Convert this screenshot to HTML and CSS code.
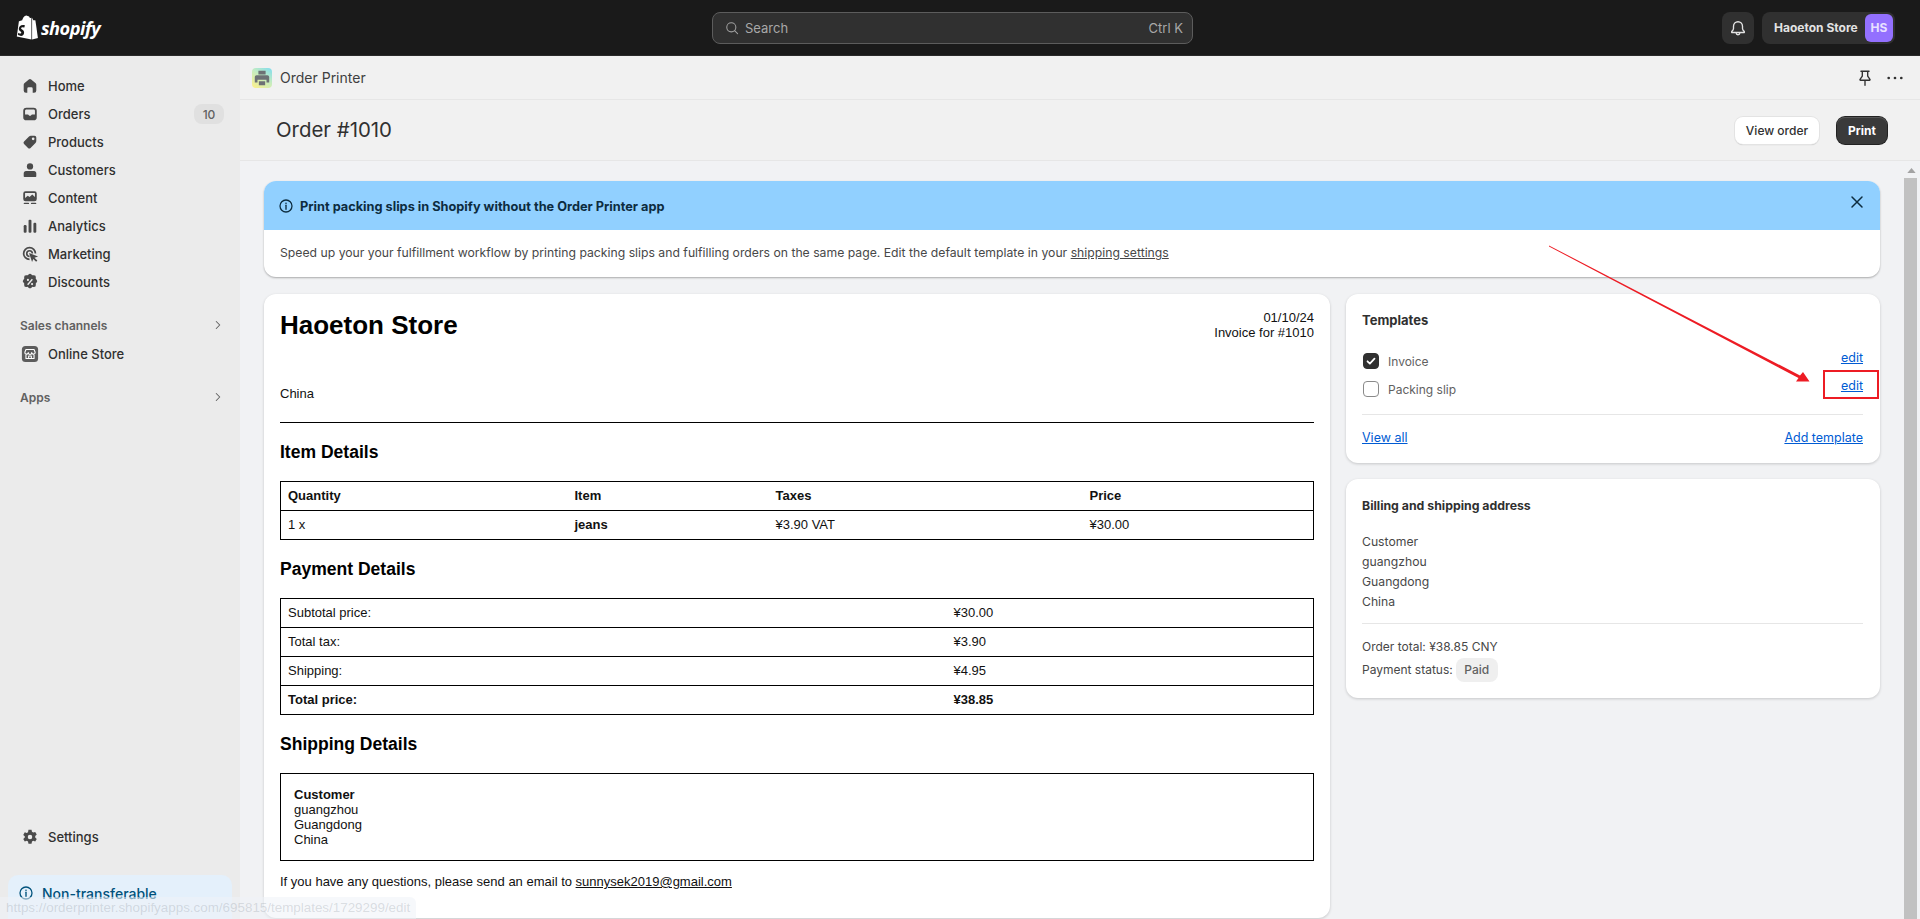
FILE: index.html
```html
<!DOCTYPE html>
<html lang="en">
<head>
<meta charset="utf-8">
<title>Order Printer</title>
<link rel="stylesheet" href="styles.css">
</head>
<body>
<div class="app">
  <header class="topbar">
    <div class="brand">
      <svg class="bag" viewBox="0 0 22 25"><path fill="#fff" d="M14.6 2.9l-.7.2C13.5 1.900 12.800 1 11.700 1h-.1C11.300.6 10.900.4 10.500.4 7.900.4 6.600 3.700 6.200 5.300l-2.500.8c-.8.2-.8.3-.9 1L.8 21.600 15.400 24.400V2.800c-.3 0-.6 0-.8.1z"/><path fill="#fff" d="M16.100 2.800v21.600l5.900-1.400S19.500 5.700 19.400 5.600c0-.2-.2-.3-.3-.3l-1.800-.1-1.200-2.400z"/><path fill="#1a1a1a" d="M9 10.200l-.8 2.500s-.8-.4-1.700-.4c-1.300 0-1.400.8-1.400 1 0 1.100 3 1.600 3 4.200 0 2.100-1.300 3.400-3.100 3.400-2.100 0-3.200-1.300-3.200-1.300l.6-1.900s1.100.9 2 .9c.6 0 .9-.5.9-.9 0-1.500-2.500-1.500-2.500-3.900 0-2 1.400-3.900 4.300-3.900 1.100 0 1.700.3 1.700.3z"/></svg>
      <span class="wordmark">shopify</span>
    </div>
    <div class="search">
      <svg class="ic14" viewBox="0 0 20 20"><circle cx="9" cy="9" r="6.500" fill="none" stroke="#a0a0a0" stroke-width="1.500"/><path d="M14 14l4 4" stroke="#a0a0a0" stroke-width="1.500" stroke-linecap="round"/></svg>
      <span class="search-label">Search</span>
      <span class="search-key">Ctrl K</span>
    </div>
    <div class="top-actions">
      <div class="bell">
        <svg class="ic18" viewBox="0 0 20 20"><path fill="none" stroke="#e3e3e3" stroke-width="1.500" stroke-linejoin="round" d="M10 3a5 5 0 0 0-5 5v2.500c0 1.200-1.300 2.800-2 3.500v1h14v-1c-.7-.7-2-2.300-2-3.500V8a5 5 0 0 0-5-5z"/><path fill="none" stroke="#e3e3e3" stroke-width="1.500" d="M8 15.500a2 2 0 0 0 4 0"/></svg>
      </div>
      <div class="store-pill">
        <span class="store-name">Haoeton Store</span>
        <span class="avatar">HS</span>
      </div>
    </div>
  </header>

  <div class="body">
    <nav class="sidebar">
      <ul class="nav">
        <li class="nav-item">
          <svg class="nav-ic" viewBox="0 0 20 20"><path d="M8.700 2.700a2 2 0 0 1 2.600 0l5 4.300c.5.400.7 1 .7 1.600V15a2.500 2.500 0 0 1-2.500 2.500H13V13a1.500 1.500 0 0 0-1.500-1.500h-3A1.500 1.500 0 0 0 7 13v4.500H5.500A2.500 2.500 0 0 1 3 15V8.600c0-.6.200-1.200.7-1.600z"/></svg>
          <span>Home</span>
        </li>
        <li class="nav-item">
          <svg class="nav-ic" viewBox="0 0 20 20"><path fill-rule="evenodd" d="M6 3h8a3.500 3.500 0 0 1 3.500 3.500v7A3.500 3.500 0 0 1 14 17H6a3.500 3.500 0 0 1-3.500-3.500v-7A3.500 3.500 0 0 1 6 3zm-1.500 7.500h3c.6 0 1 .3 1.200.8.200.5.700.7 1.300.7s1.100-.2 1.300-.7c.2-.5.600-.8 1.200-.8h3v-4c0-.8-.7-1.500-1.500-1.500H6c-.8 0-1.500.7-1.500 1.500z"/></svg>
          <span>Orders</span>
          <span class="count">10</span>
        </li>
        <li class="nav-item">
          <svg class="nav-ic" viewBox="0 0 20 20"><path fill-rule="evenodd" d="M11 3h4a2 2 0 0 1 2 2v4c0 .8-.3 1.500-.9 2.100l-5.500 5.500a2 2 0 0 1-2.800 0l-4.400-4.400a2 2 0 0 1 0-2.800l5.500-5.500C9.500 3.300 10.200 3 11 3zm2.500 5a1.500 1.500 0 1 0 0-3 1.500 1.500 0 0 0 0 3z"/></svg>
          <span>Products</span>
        </li>
        <li class="nav-item">
          <svg class="nav-ic" viewBox="0 0 20 20"><circle cx="10" cy="6" r="3.500"/><path d="M5.500 11h9c1.500 0 2.500 1.300 2.500 2.800V17a.8.8 0 0 1-.8.800H3.800A.8.8 0 0 1 3 17v-3.200C3 12.300 4 11 5.500 11z"/></svg>
          <span>Customers</span>
        </li>
        <li class="nav-item">
          <svg class="nav-ic" viewBox="0 0 20 20"><path fill-rule="evenodd" d="M5 2.500h10A2.500 2.500 0 0 1 17.500 5v6a2.500 2.500 0 0 1-2.500 2.500H5A2.500 2.500 0 0 1 2.500 11V5A2.500 2.500 0 0 1 5 2.500zM4.500 10l3-2.500 2 1.500 3-3 3 3V5c0-.3-.2-.5-.5-.5H5c-.3 0-.5.2-.5.500z"/><rect x="3" y="15.200" width="6" height="1.600" rx=".8"/><rect x="11" y="15.200" width="6" height="1.600" rx=".8"/></svg>
          <span>Content</span>
        </li>
        <li class="nav-item">
          <svg class="nav-ic" viewBox="0 0 20 20"><rect x="3" y="9" width="3.200" height="8.500" rx="1.200"/><rect x="8.400" y="3" width="3.200" height="14.500" rx="1.200"/><rect x="13.800" y="6.500" width="3.200" height="11" rx="1.200"/></svg>
          <span>Analytics</span>
        </li>
        <li class="nav-item">
          <svg class="nav-ic" viewBox="0 0 20 20"><path d="M9.500 2a7.500 7.500 0 0 1 7.500 7.500h-1.900A5.600 5.600 0 1 0 9.500 15.100V17a7.500 7.500 0 0 1 0-15z"/><path d="M9.500 5.500a4 4 0 0 1 4 4h-1.800a2.200 2.200 0 1 0-2.200 2.200v1.800a4 4 0 0 1 0-8z"/><path d="M9 9l10 3.800-4 1.300 3.200 3.200-1.400 1.400-3.200-3.200L12.300 19z"/></svg>
          <span>Marketing</span>
        </li>
        <li class="nav-item">
          <svg class="nav-ic" viewBox="0 0 20 20"><path fill-rule="evenodd" d="M8.400 1.700a2.300 2.300 0 0 1 3.200 0l1 .9 1.400-.1a2.300 2.300 0 0 1 2.500 2.500l-.1 1.400.9 1a2.300 2.300 0 0 1 0 3.200l-.9 1 .1 1.400a2.300 2.300 0 0 1-2.500 2.500l-1.400-.1-1 .9a2.300 2.300 0 0 1-3.200 0l-1-.9-1.400.1a2.300 2.300 0 0 1-2.500-2.500l.1-1.400-.9-1a2.300 2.300 0 0 1 0-3.200l.9-1-.1-1.400a2.300 2.300 0 0 1 2.500-2.500l1.400.1zM7.700 6.500a1.200 1.200 0 1 0 0 2.400 1.200 1.200 0 0 0 0-2.400zm4.600 4.600a1.200 1.200 0 1 0 0 2.400 1.200 1.200 0 0 0 0-2.400zM12 6.500L6.800 12.500l1.200 1 5.200-6z"/></svg>
          <span>Discounts</span>
        </li>
      </ul>
      <div class="nav-head nav-head-sales"><span>Sales channels</span><svg class="chev" viewBox="0 0 20 20"><path d="M7.500 5l5 5-5 5" fill="none" stroke="#616161" stroke-width="1.500" stroke-linecap="round" stroke-linejoin="round"/></svg></div>
      <div class="nav-item">
        <svg class="nav-ic" viewBox="0 0 20 20"><rect x="1" y="1" width="18" height="18" rx="4" fill="#5c5c5c"/><path d="M5.500 5h9l1.200 3a1.900 1.900 0 0 1-3.800.5 1.900 1.900 0 0 1-3.800 0 1.900 1.900 0 0 1-3.800-.5zM5.500 10.800v4.200h9v-4.200M8.500 15v-2.800h3V15" fill="none" stroke="#fff" stroke-width="1.200" stroke-linejoin="round"/></svg>
        <span>Online Store</span>
      </div>
      <div class="nav-head nav-head-apps"><span>Apps</span><svg class="chev" viewBox="0 0 20 20"><path d="M7.500 5l5 5-5 5" fill="none" stroke="#616161" stroke-width="1.500" stroke-linecap="round" stroke-linejoin="round"/></svg></div>
      <div class="nav-item nav-settings">
        <svg class="nav-ic" viewBox="0 0 20 20"><path fill-rule="evenodd" d="M8.300 2h3.400l.5 2.300 1.400.8 2.200-.7 1.700 2.900-1.700 1.600v1.600l1.700 1.600-1.700 2.900-2.200-.7-1.400.8-.5 2.300H8.300l-.5-2.300-1.400-.8-2.200.7-1.700-2.900 1.700-1.600V9.300L2.500 7.700l1.700-2.900 2.200.7 1.400-.8zM10 7.500a2.500 2.500 0 1 0 0 5 2.500 2.500 0 0 0 0-5z"/></svg>
        <span>Settings</span>
      </div>
      <div class="notice">
        <svg class="ic16" viewBox="0 0 20 20"><circle cx="10" cy="10" r="7.500" fill="none" stroke="#00527c" stroke-width="1.600"/><path d="M10 9v5" stroke="#00527c" stroke-width="1.700" stroke-linecap="round"/><circle cx="10" cy="6.500" r="1" fill="#00527c"/></svg>
        <span>Non-transferable</span>
      </div>
    </nav>

    <main class="main">
      <div class="appbar">
        <span class="app-icon">
          <svg class="ic18" viewBox="0 0 20 20"><path fill="#6d7175" d="M6 2h8v4H6zM4 7h12a2 2 0 0 1 2 2v6h-3v-3H5v3H2V9a2 2 0 0 1 2-2zM6.500 13.500h7V18h-7z"/></svg>
        </span>
        <span class="app-name">Order Printer</span>
        <span class="appbar-actions">
          <svg class="ic18" viewBox="0 0 20 20"><path fill="none" stroke="#303030" stroke-width="1.500" stroke-linejoin="round" stroke-linecap="round" d="M5.500 2.500h9M7 2.500v5.500L4.500 11.500c-.3.500 0 1 .5 1h10c.5 0 .8-.5.500-1L13 8V2.500M10 12.500v5.500"/></svg>
          <svg class="ic18" viewBox="0 0 20 20"><circle cx="3" cy="10" r="1.500" fill="#303030"/><circle cx="10" cy="10" r="1.500" fill="#303030"/><circle cx="17" cy="10" r="1.500" fill="#303030"/></svg>
        </span>
      </div>
      <div class="titlebar">
        <h1 class="page-title">Order #1010</h1>
        <div class="title-actions">
          <button class="btn">View order</button>
          <button class="btn btn-dark">Print</button>
        </div>
      </div>
      <div class="scroll-wrap">
        <div class="content">
          <section class="banner">
            <div class="banner-head">
              <svg class="ic16" viewBox="0 0 20 20"><circle cx="10" cy="10" r="7.500" fill="none" stroke="#0d2c3f" stroke-width="1.600"/><path d="M10 9v5" stroke="#0d2c3f" stroke-width="1.700" stroke-linecap="round"/><circle cx="10" cy="6.500" r="1" fill="#0d2c3f"/></svg>
              <span class="banner-title">Print packing slips in Shopify without the Order Printer app</span>
              <svg class="banner-x" viewBox="0 0 14 14"><path d="M2 2l10 10M12 2L2 12" stroke="#0d2c3f" stroke-width="1.500" stroke-linecap="round"/></svg>
            </div>
            <p class="banner-body">Speed up your your fulfillment workflow by printing packing slips and fulfilling orders on the same page. Edit the default template in your <a class="plain-link">shipping settings</a></p>
          </section>
          <div class="columns">
            <section class="card invoice">
              <div class="inv-head">
                <div class="inv-store">Haoeton Store</div>
                <div class="inv-meta">01/10/24<br>Invoice for #1010</div>
              </div>
              <p class="inv-country">China</p>
              <hr class="inv-rule">
              <h2 class="inv-h">Item Details</h2>
              <table class="inv-table">
                <colgroup><col class="c-qty"><col class="c-item"><col class="c-tax"><col></colgroup>
                <tr class="b"><td>Quantity</td><td>Item</td><td>Taxes</td><td>Price</td></tr>
                <tr><td>1 x</td><td class="b">jeans</td><td>¥3.90 VAT</td><td>¥30.00</td></tr>
              </table>
              <h2 class="inv-h">Payment Details</h2>
              <table class="inv-table">
                <colgroup><col class="c-label"><col></colgroup>
                <tr><td>Subtotal price:</td><td>¥30.00</td></tr>
                <tr><td>Total tax:</td><td>¥3.90</td></tr>
                <tr><td>Shipping:</td><td>¥4.95</td></tr>
                <tr class="b"><td>Total price:</td><td>¥38.85</td></tr>
              </table>
              <h2 class="inv-h">Shipping Details</h2>
              <div class="inv-ship"><b class="b">Customer</b><br>guangzhou<br>Guangdong<br>China</div>
              <p class="inv-foot">If you have any questions, please send an email to <a class="plain-link">sunnysek2019@gmail.com</a></p>
            </section>
            <aside class="side">
              <section class="card side-card">
                <h3 class="side-title">Templates</h3>
                <div class="tpl-list">
                  <div class="tpl-row">
                    <span class="check check-on"><svg viewBox="0 0 16 16"><path d="M4 8.300l2.700 2.700L12 5.300" fill="none" stroke="#fff" stroke-width="2" stroke-linecap="round" stroke-linejoin="round"/></svg></span>
                    <span class="tpl-label">Invoice</span>
                    <a class="link tpl-edit">edit</a>
                  </div>
                  <div class="tpl-row">
                    <span class="check"></span>
                    <span class="tpl-label">Packing slip</span>
                    <a class="link tpl-edit">edit</a>
                  </div>
                </div>
                <div class="tpl-foot">
                  <a class="link">View all</a>
                  <a class="link">Add template</a>
                </div>
              </section>
              <section class="card side-card">
                <h3 class="side-title side-title-sm">Billing and shipping address</h3>
                <div class="addr">Customer<br>guangzhou<br>Guangdong<br>China</div>
                <div class="totals">
                  <div>Order total: ¥38.85 CNY</div>
                  <div class="pay-row">Payment status: <span class="badge">Paid</span></div>
                </div>
              </section>
            </aside>
          </div>
        </div>
        <div class="rail">
          <svg class="rail-up" viewBox="0 0 10 6"><path d="M5 0l5 6H0z" fill="#a3a3a3"/></svg>
          <div class="thumb"></div>
        </div>
      </div>
    </main>
  </div>

  <svg class="annot" viewBox="0 0 1920 919">
    <path fill="#ed1c24" d="M1549 245.500L1800 375.500 1803 372 1809.500 381.500 1796 381.500 1798.500 378 1549 246.500z"/>
    <rect x="1824" y="371" width="54" height="27" fill="none" stroke="#ed1c24" stroke-width="2"/>
  </svg>
  <div class="status-url">https://orderprinter.shopifyapps.com/695815/templates/1729299/edit</div>
</div>
</body>
</html>
```
FILE: styles.css
```css
* { box-sizing: border-box; }
html, body { margin: 0; height: 100%; overflow: hidden; }
body { font-family: Inter, "Noto Sans", sans-serif; font-size: 13px; color: #303030; background: #f1f2f4; }
p, h1, h2, h3, ul { margin: 0; padding: 0; }
ul { list-style: none; }
svg { display: block; flex: none; }
.ic14 { width: 14px; height: 14px; }
.ic16 { width: 16px; height: 16px; }
.ic18 { width: 18px; height: 18px; }

.app { position: relative; height: 919px; display: flex; flex-direction: column; overflow: hidden; }

/* top bar */
.topbar { height: 56px; flex: none; background: #1a1a1a; display: grid; grid-template-columns: 696px 481px 1fr; align-items: center; padding: 0 25px 0 16px; border-bottom: 1px solid #2a2a2a; }
.brand { display: flex; align-items: center; gap: 3px; }
.bag { width: 22px; height: 25px; }
.wordmark { font-family: "Open Sans", sans-serif; font-weight: 700; font-style: italic; font-size: 18.200px; letter-spacing: -.5px; color: #fff; line-height: 24px; }
.search { height: 32px; background: #303030; border: 1px solid #5c5c5c; border-radius: 8px; display: flex; align-items: center; padding: 0 9px 0 12px; color: #a8a8a8; }
.search-label { margin-left: 6px; }
.search-key { margin-left: auto; }
.top-actions { display: flex; justify-content: flex-end; gap: 8px; }
.bell { width: 32px; height: 32px; border-radius: 8px; background: #303030; display: flex; align-items: center; justify-content: center; }
.store-pill { height: 32px; width: 133px; border-radius: 8px; background: #303030; display: flex; align-items: center; justify-content: space-between; padding: 0 2px 0 12px; }
.store-name { font-size: 12px; font-weight: 650; color: #e3e3e3; white-space: nowrap; }
.avatar { width: 28px; height: 28px; border-radius: 6px; background: #9370ff; color: #e8e0ff; font-size: 12px; font-weight: 650; display: flex; align-items: center; justify-content: center; }

/* sidebar */
.body { flex: 1; min-height: 0; display: flex; }
.sidebar { width: 240px; flex: none; background: #ebebeb; display: flex; flex-direction: column; padding: 16px 8px 0; }
.nav-item { height: 28px; display: flex; align-items: center; gap: 9px; padding: 0 8px 0 13px; font-weight: 500; color: #303030; }
.nav-ic { width: 18px; height: 18px; fill: #4a4a4a; }
.count { margin-left: auto; width: 30px; height: 20px; background: #e0e0e0; border-radius: 8px; display: flex; align-items: center; justify-content: center; font-size: 12px; color: #616161; }
.nav-head { display: flex; align-items: center; justify-content: space-between; padding: 0 7px 0 12px; height: 28px; font-size: 12px; font-weight: 600; color: #616161; }
.nav-head-sales { margin-top: 15px; margin-bottom: 1px; }
.nav-head-apps { margin-top: 15px; }
.chev { width: 14px; height: 14px; }
.nav-settings { margin-top: auto; }
.notice { margin-top: 24px; height: 44px; display: flex; align-items: center; gap: 8px; padding: 0 0 8px 10px; background: #e4f0fb; border-radius: 10px 10px 0 0; color: #00527c; font-size: 14px; font-weight: 500; }

/* main */
.main { flex: 1; min-width: 0; display: flex; flex-direction: column; }
.appbar { height: 44px; flex: none; display: flex; align-items: center; padding: 0 16px 0 12px; background: #f1f1f1; border-bottom: 1px solid #e6e6e6; }
.app-icon { width: 20px; height: 20px; border-radius: 4px; background: linear-gradient(35deg, #fff08a 0%, #c5ecc0 55%, #7fdcf0 100%); display: flex; align-items: center; justify-content: center; }
.app-name { margin-left: 8px; font-size: 14px; color: #404040; }
.appbar-actions { margin-left: auto; display: flex; align-items: center; gap: 12px; }
.titlebar { height: 61px; flex: none; display: flex; align-items: center; justify-content: space-between; padding: 0 33px 0 36px; background: #f1f1f1; border-bottom: 1px solid #e6e6e6; }
.page-title { font-size: 20.400px; font-weight: 400; color: #303030; margin-bottom: 2px; }
.title-actions { display: flex; gap: 18px; }
.btn { height: 27px; width: 84px; padding: 0; border-radius: 8px; border: 0; background: #fff; color: #303030; font: 500 12px Inter, sans-serif; box-shadow: 0 0 0 1px #e3e3e3, 0 1px 1px rgba(0,0,0,.25); }
.btn-dark { background: #3a3a3a; color: #fff; font-weight: 650; width: 50px; box-shadow: 0 0 0 1px #222, inset 0 1px 0 #555; }

.scroll-wrap { flex: 1; min-height: 0; display: flex; overflow: hidden; }
.content { flex: 1; min-width: 0; padding: 20px 23px 0 24px; }
.rail { width: 17px; flex: none; background: #f1f2f4; display: flex; flex-direction: column; align-items: center; padding-top: 7px; }
.rail-up { width: 9px; height: 5px; margin-right: 1px; }
.thumb { width: 13px; flex: 1; margin-top: 5px; margin-right: 2px; background: #c1c1c1; }

/* banner */
.banner { height: 96px; background: #fff; border-radius: 12px; overflow: hidden; box-shadow: 0 1px 2px rgba(0,0,0,.3); }
.banner-head { height: 49px; background: #91d0ff; display: flex; align-items: center; gap: 6px; padding: 1px 16px 0 14px; color: #0d2c3f; }
.banner-title { font-weight: 650; font-size: 12.750px; flex: 1; }
.banner-x { width: 14px; height: 14px; margin-top: -8px; }
.banner-body { padding: 14px 16px; font-size: 12.230px; line-height: 17px; color: #484848; }
.plain-link { text-decoration: underline; color: inherit; }

.columns { margin-top: 17px; display: grid; grid-template-columns: 1066px 1fr; gap: 16px; align-items: start; }
.card { background: #fff; border-radius: 12px; box-shadow: 0 1px 3px rgba(0,0,0,.18); }

/* invoice */
.invoice { height: 624px; padding: 16px; font-family: "Liberation Sans", Arial, sans-serif; color: #111; line-height: 15px; }
.inv-head { display: flex; justify-content: space-between; }
.inv-store { font-size: 26px; font-weight: 700; line-height: 30px; color: #000; }
.inv-meta { text-align: right; }
.inv-country { margin-top: 46px; }
.inv-rule { margin: 21px 0 0; border: 0; border-top: 1px solid #000; }
.inv-h { font-size: 17.550px; font-weight: 700; line-height: 20px; margin-top: 19px; color: #000; }
.inv-table { width: 100%; margin-top: 19px; border-collapse: collapse; table-layout: fixed; border: 1px solid #000; }
.inv-table td { height: 29px; padding: 0 7px 2px; border-top: 1px solid #000; border-bottom: 1px solid #000; }
.c-qty { width: 287px; }
.c-item { width: 201px; }
.c-tax { width: 314px; }
.c-label { width: 666px; }
.b { font-weight: 700; }
.inv-ship { margin-top: 19px; height: 88px; border: 1px solid #000; padding: 13px 13px 0; }
.inv-foot { margin-top: 13px; }

/* side */
.side { display: flex; flex-direction: column; gap: 16px; }
.side-card { padding: 16px 17px 16px 16px; }
.side-title { font-size: 13px; font-weight: 650; line-height: 20px; color: #303030; }
.side-title-sm { font-size: 12.300px; margin-top: 1px; }
.tpl-list { margin-top: 17px; }
.tpl-row { height: 28px; display: flex; align-items: center; font-size: 12px; color: #616161; }
.check { width: 16px; height: 16px; margin-left: 1px; border: 1px solid #8a8a8a; border-radius: 4px; background: #fff; flex: none; }
.check-on { background: #303030; border-color: #303030; }
.check-on svg { width: 14px; height: 14px; }
.tpl-label { margin-left: 9px; }
.tpl-edit { margin-left: auto; margin-top: -8px; }
.link { color: #005bd3; text-decoration: underline; font-size: 12.500px; }
.tpl-foot { margin-top: 11px; border-top: 1px solid #e6e6e6; padding-top: 14px; display: flex; justify-content: space-between; line-height: 17px; padding-bottom: 1px; }
.addr { margin-top: 16px; font-size: 12.200px; line-height: 20px; color: #484848; }
.totals { margin-top: 11px; border-top: 1px solid #e6e6e6; padding-top: 13px; font-size: 12px; line-height: 20px; color: #484848; }
.pay-row { display: flex; align-items: center; gap: 3px; margin-top: 1px; }
.badge { height: 24px; width: 42px; background: #efefef; border-radius: 8px; display: flex; align-items: center; justify-content: center; font-weight: 500; color: #616161; }

/* overlays */
.annot { position: absolute; left: 0; top: 0; width: 1920px; height: 919px; pointer-events: none; }
.status-url { position: absolute; left: 0; bottom: 0; width: 416px; height: 22px; padding: 3px 0 0 6px; border-top-right-radius: 6px; background: rgba(238,243,248,.55); color: rgba(120,130,140,.24); font: 13.400px "Liberation Sans", Arial, sans-serif; white-space: nowrap; overflow: hidden; }
```
